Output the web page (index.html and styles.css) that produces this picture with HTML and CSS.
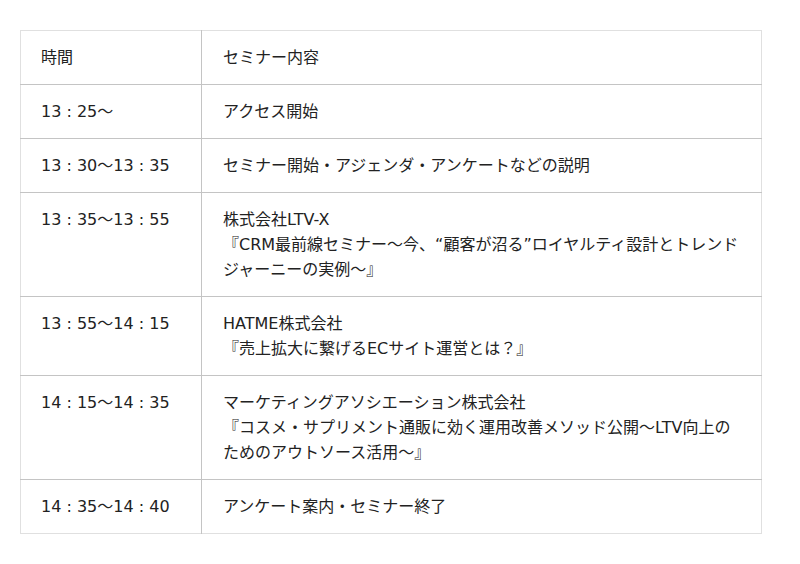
FILE: index.html
```html
<!DOCTYPE html>
<html lang="ja">
<head>
<meta charset="utf-8">
<link rel="stylesheet" href="styles.css">
</head>
<body>
<table class="schedule">
  <tr><td class="time">時間</td><td class="desc">セミナー内容</td></tr>
  <tr><td class="time">13 : 25～</td><td class="desc">アクセス開始</td></tr>
  <tr><td class="time">13 : 30～13 : 35</td><td class="desc">セミナー開始・アジェンダ・アンケートなどの説明</td></tr>
  <tr><td class="time">13 : 35～13 : 55</td><td class="desc">株式会社LTV-X<br>『CRM最前線セミナー～今、“顧客が沼る”ロイヤルティ設計とトレンドジャーニーの実例～』</td></tr>
  <tr><td class="time">13 : 55～14 : 15</td><td class="desc">HATME株式会社<br>『売上拡大に繋げるECサイト運営とは？』</td></tr>
  <tr><td class="time">14 : 15～14 : 35</td><td class="desc">マーケティングアソシエーション株式会社<br>『コスメ・サプリメント通販に効く運用改善メソッド公開～LTV向上のためのアウトソース活用～』</td></tr>
  <tr><td class="time">14 : 35～14 : 40</td><td class="desc">アンケート案内・セミナー終了</td></tr>
</table>
</body>
</html>
```
FILE: styles.css
```css
html, body {
  margin: 0;
  padding: 0;
  background: #fff;
}
body {
  padding: 30px 0 0 20px;
  font-family: "DejaVu Sans", "Noto Sans CJK JP", sans-serif;
  font-size: 16px;
  color: #222;
}
.schedule {
  width: 742px;
  border-collapse: collapse;
  border: 1px solid #e0e0e0;
}
.schedule td {
  padding: 14px 20px;
  line-height: 25px;
  vertical-align: top;
  border-top: 1px solid #c4c4c4;
}
.schedule tr:first-child td {
  border-top: 1px solid #e0e0e0;
}
.schedule .time {
  width: 140px;
  border-right: 1px solid #c4c4c4;
  white-space: nowrap;
}
.schedule .desc {
  padding-left: 21px;
}
```
